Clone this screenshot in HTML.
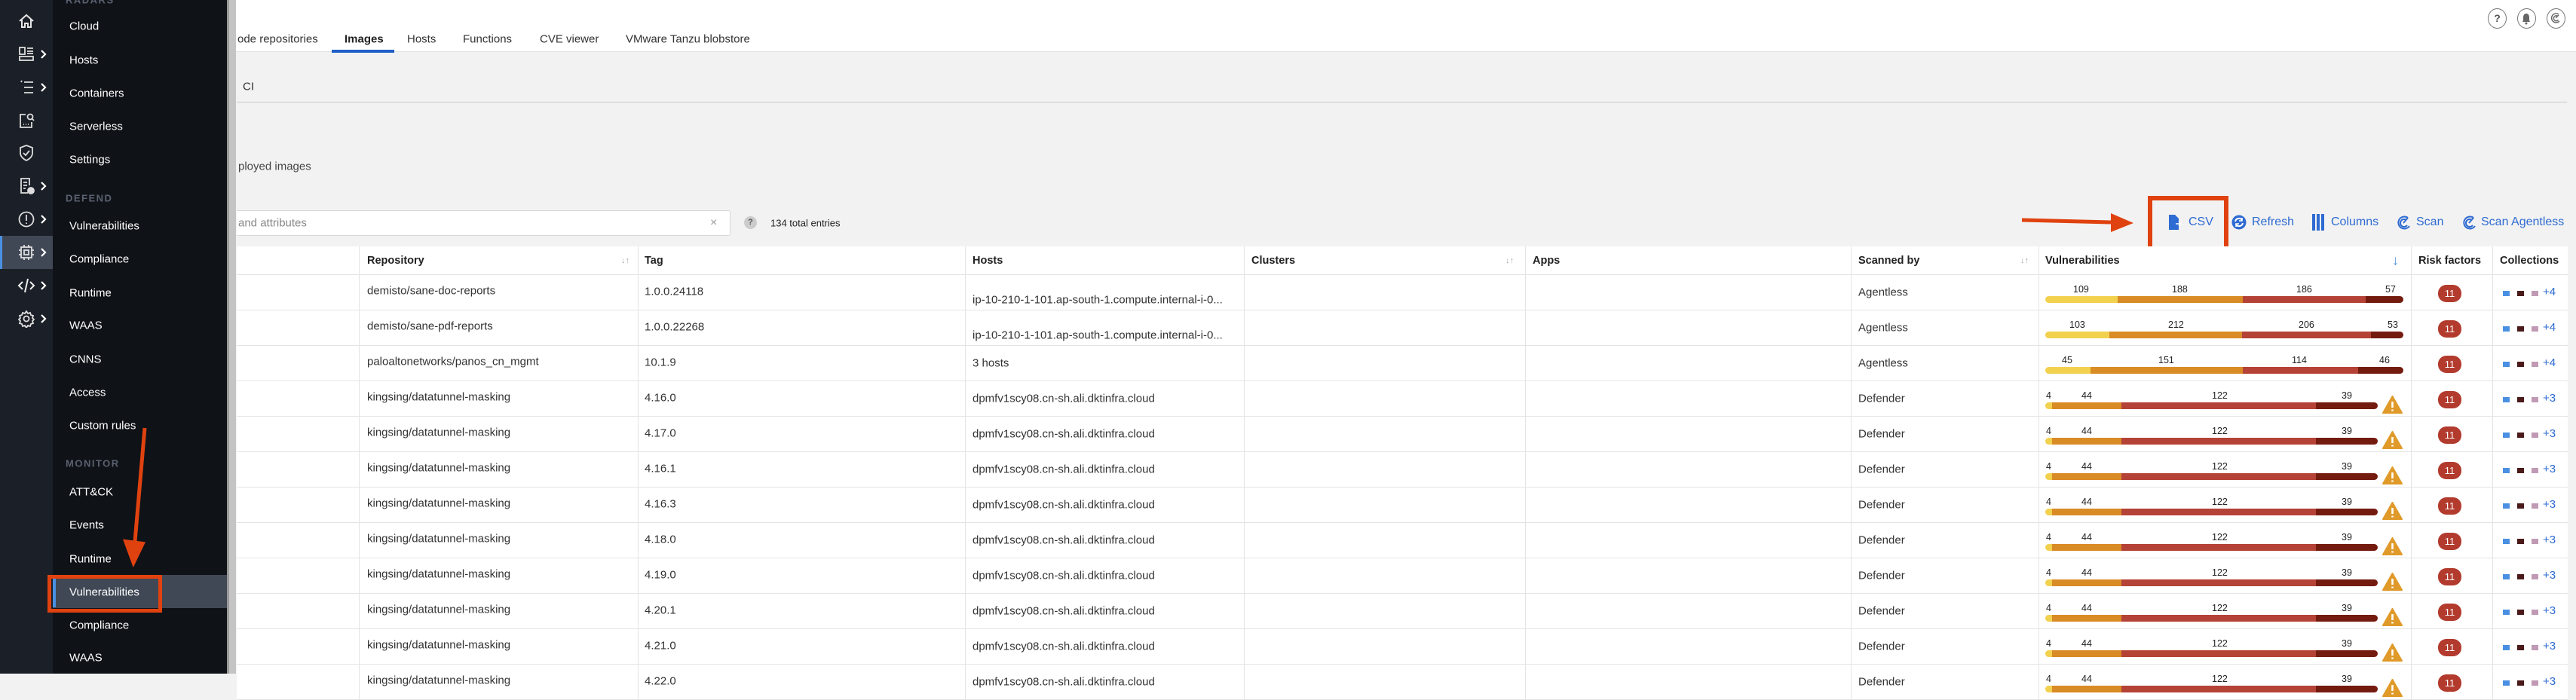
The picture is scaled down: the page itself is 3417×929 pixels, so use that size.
<!DOCTYPE html>
<html><head><meta charset="utf-8">
<style>
*{margin:0;padding:0;box-sizing:border-box}
body{width:3417px;height:894px;overflow:hidden;background:#f2f2f2;font-family:"Liberation Sans",sans-serif;position:relative;color:#333}
.a{position:absolute;white-space:nowrap}
#rail{position:absolute;left:0;top:0;width:70px;height:894px;background:#1b1f27}
#menu{position:absolute;left:70px;top:0;width:231px;height:894px;background:#0f1217}
#sb{position:absolute;left:301px;top:0;width:12px;height:894px;background:#c4c4c4;border-left:3px solid #9a9a9a}
.mi{position:absolute;left:22px;color:#fff;font-size:15px;transform:translateY(-50%)}
.sec{position:absolute;left:17px;color:#5a6170;font-size:13px;font-weight:bold;letter-spacing:1.5px;transform:translateY(-50%)}
.ic{position:absolute;left:23px;width:24px;height:24px}
.chev{position:absolute;left:52px;width:10px;height:12px}
#hdr{position:absolute;left:313px;top:0;width:3104px;height:69px;background:#fff;border-bottom:1px solid #e2e2e2}
.tab{position:absolute;top:52px;font-size:15px;color:#333;transform:translateY(-50%)}
.th{position:absolute;font-size:14.5px;font-weight:bold;color:#222;transform:translateY(-50%)}
.td{position:absolute;font-size:15px;color:#333;transform:translateY(-50%)}
.row{position:absolute;left:314px;width:3092px;height:47px;border-bottom:1px solid #e4e4e4;background:#fff}
.vl{position:absolute;top:0;width:1px;height:100%;background:#e4e4e4}
.bar{position:absolute;top:28px;height:9px;border-radius:5px;overflow:hidden;display:flex}
.num{position:absolute;top:12px;font-size:12.5px;color:#222}
.badge{position:absolute;left:2921px;top:13px;width:31px;height:23px;border-radius:11px;background:#b23b2e;color:#fff;font-size:13px;text-align:center;line-height:23px}
.sq{position:absolute;top:21px;width:9px;height:7px}
.plus{position:absolute;top:14px;font-size:15px;color:#2e6bd2}
.tb{position:absolute;top:295px;font-size:16px;color:#2e6bd2;transform:translateY(-50%)}
</style></head><body>

<div id="rail">
  <div style="position:absolute;left:0;top:313px;width:70px;height:44px;background:#404856"></div>
  <div style="position:absolute;left:0;top:313px;width:3px;height:44px;background:#4a90e2"></div>
  <svg class="ic" style="top:16px" viewBox="0 0 24 24" fill="none" stroke="#e6e6e6" stroke-width="2"><path d="M3 12L12 4l9 8M6 10v10h4v-5h4v5h4V10"/></svg>
  <svg class="ic" style="top:60px" viewBox="0 0 24 24" fill="none" stroke="#ddd" stroke-width="1.8"><rect x="3" y="3" width="7" height="9"/><path d="M13 4h8M13 8h8M13 11h8"/><rect x="3" y="15" width="18" height="5"/></svg>
  <svg class="ic" style="top:104px" viewBox="0 0 24 24" fill="none" stroke="#ddd" stroke-width="1.8"><path d="M5 5l1-2M9 5h12M9 12h12M9 19h12"/></svg>
  <svg class="ic" style="top:148px" viewBox="0 0 24 24" fill="none" stroke="#ddd" stroke-width="1.8"><path d="M11 4H4v17h15v-7"/><circle cx="17" cy="7" r="3.5"/><path d="M19.5 9.5L22 12M8 17h1M11 17h1M14 17h1"/></svg>
  <svg class="ic" style="top:191px" viewBox="0 0 24 24" fill="none" stroke="#ddd" stroke-width="1.8"><path d="M12 2l8 3v7c0 5-4 8-8 10-4-2-8-5-8-10V5z"/><path d="M8 12l3 3 5-6"/></svg>
  <svg class="ic" style="top:235px" viewBox="0 0 24 24" fill="none" stroke="#ddd" stroke-width="1.8"><path d="M14 21H5V2h11v9"/><path d="M8 7h5M8 11h5M8 15h3"/><circle cx="18" cy="18" r="4" fill="#ddd"/></svg>
  <svg class="ic" style="top:279px" viewBox="0 0 24 24" fill="none" stroke="#ddd" stroke-width="1.8"><circle cx="12" cy="12" r="9.5"/><path d="M12 6v8M12 16.5v1.5"/></svg>
  <svg class="ic" style="top:323px" viewBox="0 0 24 24" fill="none" stroke="#ddd" stroke-width="1.8"><rect x="5" y="5" width="14" height="14"/><rect x="9" y="9" width="6" height="6"/><path d="M9 2v3M15 2v3M9 19v3M15 19v3M2 9h3M2 15h3M19 9h3M19 15h3"/></svg>
  <svg class="ic" style="top:367px" viewBox="0 0 24 24" fill="none" stroke="#eee" stroke-width="2"><path d="M7 7l-5 5 5 5M17 7l5 5-5 5M14 3l-4 18"/></svg>
  <svg class="ic" style="top:411px" viewBox="0 0 24 24" fill="none" stroke="#ddd" stroke-width="1.8"><circle cx="12" cy="12" r="3.5"/><path d="M12 2l2 3 3-1 1 3 3 1-1 3 2 2-2 2 1 3-3 1-1 3-3-1-2 3-2-3-3 1-1-3-3-1 1-3-2-2 2-2-1-3 3-1 1-3 3 1z"/></svg>
  <svg class="chev" style="top:66px" viewBox="0 0 10 12" fill="none" stroke="#fff" stroke-width="2.2"><path d="M3 1l5 5-5 5"/></svg>
  <svg class="chev" style="top:110px" viewBox="0 0 10 12" fill="none" stroke="#fff" stroke-width="2.2"><path d="M3 1l5 5-5 5"/></svg>
  <svg class="chev" style="top:241px" viewBox="0 0 10 12" fill="none" stroke="#fff" stroke-width="2.2"><path d="M3 1l5 5-5 5"/></svg>
  <svg class="chev" style="top:285px" viewBox="0 0 10 12" fill="none" stroke="#fff" stroke-width="2.2"><path d="M3 1l5 5-5 5"/></svg>
  <svg class="chev" style="top:329px" viewBox="0 0 10 12" fill="none" stroke="#fff" stroke-width="2.2"><path d="M3 1l5 5-5 5"/></svg>
  <svg class="chev" style="top:373px" viewBox="0 0 10 12" fill="none" stroke="#fff" stroke-width="2.2"><path d="M3 1l5 5-5 5"/></svg>
  <svg class="chev" style="top:417px" viewBox="0 0 10 12" fill="none" stroke="#fff" stroke-width="2.2"><path d="M3 1l5 5-5 5"/></svg>
</div>

<div id="menu">
  <div class="sec" style="top:0px">RADARS</div>
  <div class="mi" style="top:35px">Cloud</div>
  <div class="mi" style="top:80px">Hosts</div>
  <div class="mi" style="top:124px">Containers</div>
  <div class="mi" style="top:168px">Serverless</div>
  <div class="mi" style="top:212px">Settings</div>
  <div class="sec" style="top:263px">DEFEND</div>
  <div class="mi" style="top:300px">Vulnerabilities</div>
  <div class="mi" style="top:344px">Compliance</div>
  <div class="mi" style="top:389px">Runtime</div>
  <div class="mi" style="top:432px">WAAS</div>
  <div class="mi" style="top:477px">CNNS</div>
  <div class="mi" style="top:521px">Access</div>
  <div class="mi" style="top:565px">Custom rules</div>
  <div class="sec" style="top:615px">MONITOR</div>
  <div class="mi" style="top:653px">ATT&amp;CK</div>
  <div class="mi" style="top:697px">Events</div>
  <div class="mi" style="top:742px">Runtime</div>
  <div style="position:absolute;left:0;top:763px;width:231px;height:44px;background:#404856"></div>
  <div style="position:absolute;left:0;top:768px;width:4px;height:38px;background:#4a90e2"></div>
  <div class="mi" style="top:786px">Vulnerabilities</div>
  <div class="mi" style="top:830px">Compliance</div>
  <div class="mi" style="top:873px">WAAS</div>
</div>
<div style="position:absolute;left:63px;top:763px;width:152px;height:50px;border:5px solid #e0420f"></div>
<svg class="a" style="left:160px;top:560px" width="50" height="195" viewBox="0 0 50 195"><path d="M32 8L18 170" stroke="#e0420f" stroke-width="5" fill="none"/><path d="M4 160L15 190L28 163z" fill="#e0420f" stroke="#e0420f" stroke-width="4" transform="translate(2,-2)"/></svg>

<div id="sb"></div>

<div id="hdr">
  <div class="tab" style="left:2px">ode repositories</div>
  <div class="tab" style="left:144px;font-weight:bold;color:#222">Images</div>
  <div style="position:absolute;left:127px;top:66px;width:83px;height:4px;background:#1f5fc7"></div>
  <div class="tab" style="left:227px">Hosts</div>
  <div class="tab" style="left:301px">Functions</div>
  <div class="tab" style="left:403px">CVE viewer</div>
  <div class="tab" style="left:517px">VMware Tanzu blobstore</div>
  <div style="position:absolute;left:2987px;top:11px;width:25px;height:27px;border:1.5px solid #777;border-radius:50%;font-size:14px;font-weight:bold;text-align:center;line-height:24px;color:#555">?</div>
  <div style="position:absolute;left:3026px;top:11px;width:25px;height:27px;border:1.5px solid #777;border-radius:50%"><svg width="22" height="24" viewBox="0 0 22 24"><path d="M11 6c-3 0-4 3-4 5v4l-1 2h10l-1-2v-4c0-2-1-5-4-5z" fill="#666"/><circle cx="11" cy="19" r="1.5" fill="#666"/></svg></div>
  <div style="position:absolute;left:3065px;top:11px;width:25px;height:27px;border:1.5px solid #777;border-radius:50%"><svg width="22" height="24" viewBox="0 0 22 24" fill="none" stroke="#666" stroke-width="1.4"><path d="M15 7a6 6 0 1 0 1 9M14 9.5a3.5 3.5 0 1 0 0.5 5M11 12l4-4"/></svg></div>
</div>

<div class="a" style="left:322px;top:115px;font-size:15px;transform:translateY(-50%)">CI</div>
<div style="position:absolute;left:314px;top:135px;width:3091px;height:1px;background:#c8c8c8"></div>
<div class="a" style="left:316px;top:221px;font-size:15px;color:#444;transform:translateY(-50%)">ployed images</div>

<div style="position:absolute;left:314px;top:279px;width:655px;height:34px;background:#fff;border:1px solid #d8d8d8;border-left:none;border-radius:0 3px 3px 0"></div>
<div class="a" style="left:316px;top:296px;font-size:15px;color:#888;transform:translateY(-50%)">and attributes</div>
<div class="a" style="left:942px;top:296px;font-size:16px;color:#999;transform:translateY(-50%)">×</div>
<div style="position:absolute;left:987px;top:287px;width:17px;height:17px;border-radius:50%;background:#ccc;color:#555;font-size:11px;font-weight:bold;text-align:center;line-height:17px">?</div>
<div class="a" style="left:1022px;top:296px;font-size:13px;color:#222;transform:translateY(-50%)">134 total entries</div>

<svg class="a" style="left:2680px;top:283px" width="170" height="26" viewBox="0 0 170 26"><path d="M2 9L120 12" stroke="#e0420f" stroke-width="5"/><path d="M120 0L150 13L120 25z" fill="#e0420f"/></svg>
<div style="position:absolute;left:2849px;top:260px;width:107px;height:73px;border:6px solid #e0420f"></div>
<svg class="a" style="left:2876px;top:284px" width="18" height="22" viewBox="0 0 18 22"><path d="M1 1h8l5 5v15H1z" fill="#2e6bd2"/><path d="M10 13h7M14 10l3 3-3 3" stroke="#fff" stroke-width="1.5" fill="none"/></svg>
<div class="tb" style="left:2903px">CSV</div>
<svg class="a" style="left:2960px;top:285px" width="20" height="20" viewBox="0 0 20 20"><circle cx="10" cy="10" r="9.5" fill="#2e6bd2"/><path d="M5 9a5 5 0 0 1 9-2M15 11a5 5 0 0 1-9 2" stroke="#fff" stroke-width="2" fill="none"/><path d="M14 4v4h-4M6 16v-4h4" stroke="#fff" stroke-width="1.6" fill="none"/></svg>
<div class="tb" style="left:2987px">Refresh</div>
<svg class="a" style="left:3067px;top:284px" width="16" height="22" viewBox="0 0 16 22"><rect x="0" y="0" width="4" height="22" fill="#2e6bd2"/><rect x="6" y="0" width="4" height="22" fill="#2e6bd2"/><rect x="12" y="0" width="4" height="22" fill="#2e6bd2"/></svg>
<div class="tb" style="left:3092px">Columns</div>
<svg class="a" style="left:3178px;top:284px" width="20" height="22" viewBox="0 0 20 22" fill="none" stroke="#2e6bd2" stroke-width="2"><path d="M16 5a8 8 0 1 0 2 11M14 8a5 5 0 1 0 1 7M10 12l6-7"/></svg>
<div class="tb" style="left:3205px">Scan</div>
<svg class="a" style="left:3265px;top:284px" width="20" height="22" viewBox="0 0 20 22" fill="none" stroke="#2e6bd2" stroke-width="2"><path d="M16 5a8 8 0 1 0 2 11M14 8a5 5 0 1 0 1 7M10 12l6-7"/></svg>
<div class="tb" style="left:3291px">Scan Agentless</div>

<div class="row" style="top:327px;height:38px">
  <div class="vl" style="left:162px"></div><div class="vl" style="left:532px"></div><div class="vl" style="left:966px"></div><div class="vl" style="left:1336px"></div><div class="vl" style="left:1709px"></div><div class="vl" style="left:2141px"></div><div class="vl" style="left:2390px"></div><div class="vl" style="left:2884px"></div><div class="vl" style="left:2992px"></div>
  <div class="th" style="left:173px;top:19px">Repository</div>
  <div class="th" style="left:541px;top:19px">Tag</div>
  <div class="th" style="left:976px;top:19px">Hosts</div>
  <div class="th" style="left:1346px;top:19px">Clusters</div>
  <div class="th" style="left:1719px;top:19px">Apps</div>
  <div class="th" style="left:2151px;top:19px">Scanned by</div>
  <div class="th" style="left:2399px;top:19px">Vulnerabilities</div>
  <div class="th" style="left:2894px;top:19px">Risk factors</div>
  <div class="th" style="left:3002px;top:19px">Collections</div>
  <div class="td" style="left:510px;top:19px;font-size:11px;color:#aaa">↓↑</div>
  <div class="td" style="left:1683px;top:19px;font-size:11px;color:#aaa">↓↑</div>
  <div class="td" style="left:2366px;top:19px;font-size:11px;color:#aaa">↓↑</div>
  <div class="td" style="left:2859px;top:19px;font-size:18px;color:#4a90e2">↓</div>
</div>

<div id="rows"></div>
<script>
var Y='#f2d14f',O='#d98b26',R='#b54236',D='#741b10';
var rows=[
['demisto/sane-doc-reports','1.0.0.24118','ip-10-210-1-101.ap-south-1.compute.internal-i-0...','Agentless',[2713,2809,2975,3138,3188],[['109',2750],['188',2881],['186',3046],['57',3164]],'+4',0],
['demisto/sane-pdf-reports','1.0.0.22268','ip-10-210-1-101.ap-south-1.compute.internal-i-0...','Agentless',[2713,2798,2974,3145,3188],[['103',2745],['212',2876],['206',3049],['53',3167]],'+4',0],
['paloaltonetworks/panos_cn_mgmt','10.1.9','3 hosts','Agentless',[2713,2773,2975,3128,3188],[['45',2735],['151',2863],['114',3040],['46',3156]],'+4',0]];
['4.16.0','4.17.0','4.16.1','4.16.3','4.18.0','4.19.0','4.20.1','4.21.0','4.22.0'].forEach(function(t){
rows.push(['kingsing/datatunnel-masking',t,'dpmfv1scy08.cn-sh.ali.dktinfra.cloud','Defender',[2713,2722,2814,3072,3154],[['4',2714],['44',2761],['122',2934],['39',3106]],'+3',1]);});
var h='';
rows.forEach(function(r,i){
 var top=365+i*47, L=314;
 h+='<div class="row" style="top:'+top+'px">';
 [162,532,966,1336,1709,2141,2390,2884,2992].forEach(function(x){h+='<div class="vl" style="left:'+x+'px"></div>';});
 h+='<div class="td" style="left:173px;top:21px">'+r[0]+'</div>';
 h+='<div class="td" style="left:541px;top:22px">'+r[1]+'</div>';
 h+='<div class="td" style="left:976px;top:'+(i<2?33:23)+'px">'+r[2]+'</div>';
 h+='<div class="td" style="left:2151px;top:23px">'+r[3]+'</div>';
 var b=r[4],c=[Y,O,R,D];
 h+='<div class="bar" style="left:'+(b[0]-L)+'px;width:'+(b[4]-b[0])+'px">';
 for(var k=0;k<4;k++)h+='<div style="width:'+(b[k+1]-b[k])+'px;background:'+c[k]+'"></div>';
 h+='</div>';
 r[5].forEach(function(n){h+='<div class="num" style="left:'+(n[1]-L)+'px">'+n[0]+'</div>';});
 if(r[7])h+='<svg style="position:absolute;left:'+(3160-L)+'px;top:19px" width="27" height="24" viewBox="0 0 27 24"><path d="M13.5 1L26 23H1z" fill="#e09a2a" stroke="#e09a2a" stroke-linejoin="round" stroke-width="2"/><path d="M13.5 8v8M13.5 18.5v2" stroke="#fff" stroke-width="2.6"/></svg>';
 h+='<div class="badge" style="left:'+(3234-L)+'px">11</div>';
 h+='<div class="sq" style="left:'+(3320-L)+'px;background:#4a90e2"></div><div class="sq" style="left:'+(3339-L)+'px;background:#4a1a1a"></div><div class="sq" style="left:'+(3358-L)+'px;background:#c09ab5"></div>';
 h+='<div class="plus" style="left:'+(3373-L)+'px">'+r[6]+'</div>';
 h+='</div>';
});
document.getElementById('rows').innerHTML=h;
</script>
</body></html>
